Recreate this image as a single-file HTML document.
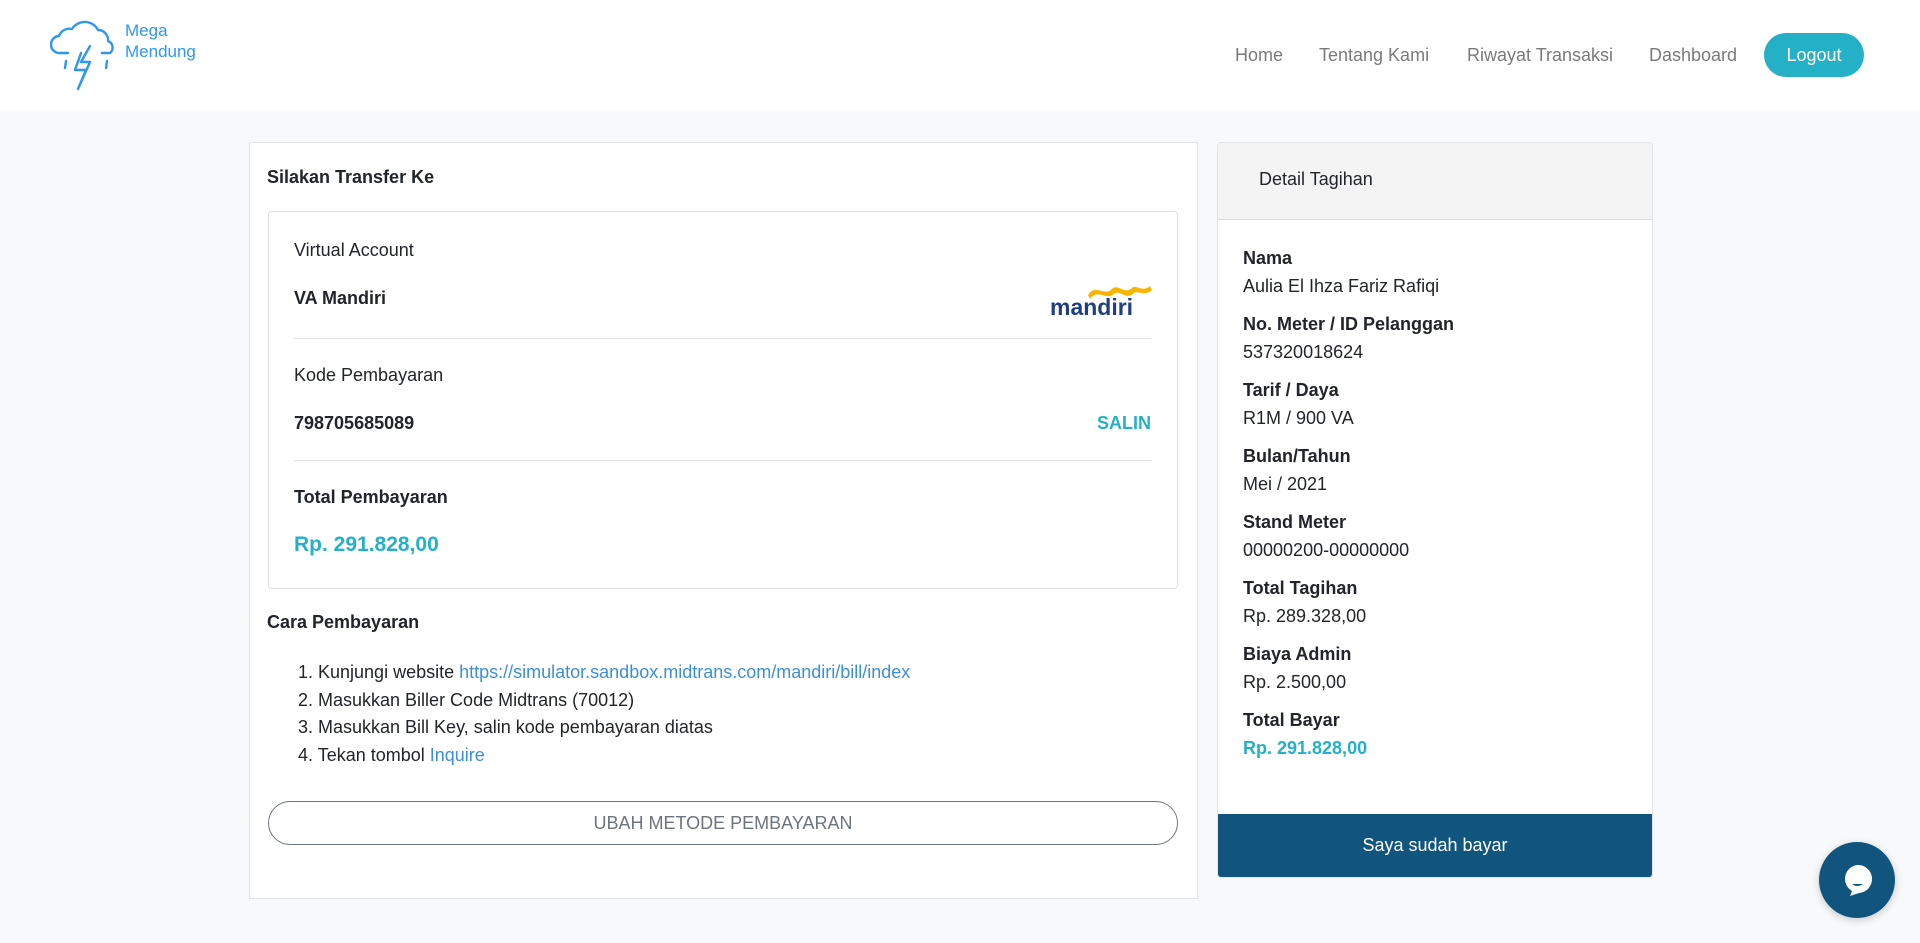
<!DOCTYPE html>
<html><head><meta charset="utf-8"><style>
*{box-sizing:border-box;margin:0;padding:0}
body{width:1920px;height:943px;background:#f8f9fa;font-family:"Liberation Sans",sans-serif;color:#212529;position:relative;overflow:hidden;font-size:18px}
.hdr{position:absolute;left:0;top:0;width:1920px;height:111px;background:#fff}
.a{position:absolute;white-space:nowrap}
.nav{color:#7a7a7a;font-size:18px;top:45px}
.card{position:absolute;background:#fff;border:1px solid #e1e3e6}
.t{color:#24b1c8}
.lbl{font-weight:bold;color:#212529}
.line{position:absolute;height:1px;background:#dee2e6}
</style></head><body>
<div class="hdr">
<svg class="a" style="left:50px;top:16px" width="72" height="78" viewBox="0 0 72 78" fill="none" stroke="#2e97f0" stroke-width="2.4" stroke-linecap="round" stroke-linejoin="round">
<path d="M18 37 H10 A8.5 8.5 0 0 1 9 20 A11 11 0 0 1 22 13 A15 15 0 0 1 48 14 A10 10 0 0 1 58 25 A7 7 0 0 1 60 37 H52"/>
<path d="M40 30 L31 46 H40 L28 73 L36 54 H25 L31 37"/>
<path d="M16 45 L15 52 M57 45 L56 52"/>
</svg>
<div class="a" style="left:125px;top:20px;color:#2e97f0;font-size:17px;line-height:21px">Mega<br>Mendung</div>
<div class="a nav" style="left:1235px">Home</div>
<div class="a nav" style="left:1319px">Tentang Kami</div>
<div class="a nav" style="left:1467px">Riwayat Transaksi</div>
<div class="a nav" style="left:1649px">Dashboard</div>
<div class="a" style="left:1764px;top:33px;width:100px;height:44px;border-radius:22px;background:#24b1c8;color:#fff;font-size:18px;text-align:center;line-height:44px">Logout</div>
</div>

<div class="card" style="left:249px;top:142px;width:949px;height:757px"></div>
<div class="a lbl" style="left:267px;top:167px">Silakan Transfer Ke</div>
<div class="card" style="left:268px;top:211px;width:910px;height:378px;border-radius:4px;border-color:#dcdfe3"></div>
<div class="a" style="left:294px;top:240px">Virtual Account</div>
<div class="a lbl" style="left:294px;top:288px">VA Mandiri</div>
<svg class="a" style="left:1050px;top:283px" width="102" height="36" viewBox="0 0 102 36">
<path d="M38 12 C46 0 54 14 62 6 C68 0 74 12 82 5 C86 1 92 10 100 3 L102 7 C94 14 88 7 84 10 C76 18 70 6 64 11 C56 18 48 5 40 16Z" fill="#f6b600"/>
<text x="0" y="32" font-family="Liberation Sans" font-weight="bold" font-size="23" fill="#1f3f7f">mandiri</text>
</svg>
<div class="line" style="left:294px;top:338px;width:857px"></div>
<div class="a" style="left:294px;top:365px">Kode Pembayaran</div>
<div class="a lbl" style="left:294px;top:413px">798705685089</div>
<div class="a t" style="left:1091px;top:413px;font-weight:bold;width:60px;text-align:right">SALIN</div>
<div class="line" style="left:294px;top:460px;width:857px"></div>
<div class="a lbl" style="left:294px;top:487px">Total Pembayaran</div>
<div class="a t" style="left:294px;top:533px;font-size:21px;font-weight:bold">Rp. 291.828,00</div>
<div class="a lbl" style="left:267px;top:612px">Cara Pembayaran</div>
<div class="a" style="left:298px;top:659px;line-height:27.7px">1. Kunjungi website <span style="color:#3b8fd9">https://simulator.sandbox.midtrans.com/mandiri/bill/index</span><br>2. Masukkan Biller Code Midtrans (70012)<br>3. Masukkan Bill Key, salin kode pembayaran diatas<br>4. Tekan tombol <span style="color:#3b8fd9">Inquire</span></div>
<div class="a" style="left:268px;top:801px;width:910px;height:44px;border:1px solid #6c757d;border-radius:22px;text-align:center;line-height:42px;color:#6c757d">UBAH METODE PEMBAYARAN</div>

<div class="card" style="left:1217px;top:142px;width:436px;height:736px;border-radius:4px;overflow:hidden">
<div style="height:77px;background:#f4f4f4;border-bottom:1px solid #dcdcdc"></div>
<div style="position:absolute;left:0;bottom:0;width:100%;height:63px;background:#11557f;color:#fff;text-align:center;line-height:63px">Saya sudah bayar</div>
</div>
<div class="a" style="left:1259px;top:169px">Detail Tagihan</div>
<div class="a" style="left:1243px;top:244px;line-height:28px">
<span class="lbl">Nama</span><br>Aulia El Ihza Fariz Rafiqi<div style="height:10px"></div>
<span class="lbl">No. Meter / ID Pelanggan</span><br>537320018624<div style="height:10px"></div>
<span class="lbl">Tarif / Daya</span><br>R1M / 900 VA<div style="height:10px"></div>
<span class="lbl">Bulan/Tahun</span><br>Mei / 2021<div style="height:10px"></div>
<span class="lbl">Stand Meter</span><br>00000200-00000000<div style="height:10px"></div>
<span class="lbl">Total Tagihan</span><br>Rp. 289.328,00<div style="height:10px"></div>
<span class="lbl">Biaya Admin</span><br>Rp. 2.500,00<div style="height:10px"></div>
<span class="lbl">Total Bayar</span><br><span class="t" style="font-weight:bold">Rp. 291.828,00</span>
</div>

<div class="a" style="left:1819px;top:842px;width:76px;height:76px;border-radius:50%;background:#11557f;box-shadow:0 2px 8px rgba(0,0,0,.2)">
<svg width="76" height="76" viewBox="0 0 76 76"><path d="M38 23 A14 14 0 1 1 40 51 L31 54 L33 49 A14 14 0 0 1 38 23Z" fill="#fff"/><path d="M33 42 Q38 46 44 42Z" fill="#11557f"/></svg>
</div>
</body></html>
